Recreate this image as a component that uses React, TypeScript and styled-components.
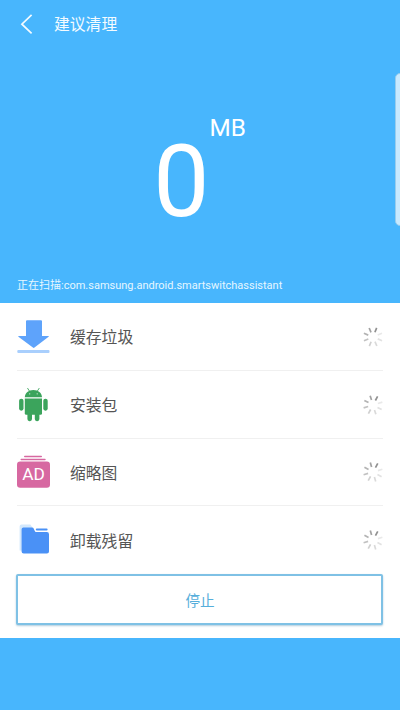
import React from 'react';
import styled, { createGlobalStyle } from 'styled-components';

const GlobalStyle = createGlobalStyle`
  * { box-sizing: border-box; }
  body { margin: 0; background: #48b6fd; }
`;

const Screen = styled.main`
  position: relative;
  display: flex;
  flex-direction: column;
  width: 400px;
  height: 710px;
  overflow: hidden;
  background: #48b6fd;
  font-family: Roboto, 'Noto Sans CJK SC', sans-serif;
`;

const TopBar = styled.header`
  display: flex;
  align-items: center;
  gap: 21px;
  height: 47px;
  padding-left: 20px;
  color: #f4fbff;
`;

const Title = styled.h1`
  margin: 0;
  padding-top: 2px;
  font-size: 15.8px;
  line-height: 24px;
  font-weight: 400;
`;

const Summary = styled.section`
  display: flex;
  flex-direction: column;
  justify-content: space-between;
  height: 256px;
  padding: 67px 17px 7px;
  color: #fff;
`;

const Amount = styled.div`
  display: flex;
  justify-content: center;
  padding-right: 1px;
`;

const Value = styled.span`
  font-size: 100px;
  line-height: 136px;
`;

const Unit = styled.span`
  font-size: 24.3px;
  line-height: 28px;
`;

const Scanning = styled.p`
  margin: 0;
  font-size: 11px;
  line-height: 20px;
  white-space: nowrap;
  color: #e6f6ff;
`;

const Panel = styled.section`
  height: 335px;
  padding: 0 17px;
  background: #fff;
`;

const List = styled.ul`
  margin: 0;
  padding: 0;
  list-style: none;
`;

const Row = styled.li`
  display: grid;
  grid-template-columns: 53px 1fr 20px;
  align-items: center;
  height: 67.75px;
  padding-top: 1px;
  border-bottom: 1px solid #f0f0f0;
  color: #555;

  &:last-child { border-bottom-color: transparent; }
`;

const Label = styled.span`
  padding-top: 3px;
  font-size: 15.8px;
  line-height: 24px;
`;

const StopButton = styled.button`
  display: block;
  width: 367px;
  height: 51px;
  margin-left: -1px;
  padding: 2px 0 0 1px;
  border: 2px solid #7fc1e5;
  border-radius: 2px;
  background: #fff;
  box-shadow: 0 1px 2px rgba(60, 130, 170, 0.4);
  font: 400 14.6px/22px Roboto, 'Noto Sans CJK SC', sans-serif;
  color: #56aedb;
`;

const EdgeHandle = styled.div`
  position: absolute;
  top: 73px;
  right: -5px;
  width: 10px;
  height: 153px;
  border: 1px solid #9acdec;
  border-radius: 5px;
  background: #c8eaff;
`;

const Icon = styled.svg`
  display: block;
  overflow: visible;
`;

const BackIcon = () => (
  <Icon width="13" height="20" viewBox="0 0 13 20" fill="none" stroke="currentColor" strokeWidth="1.7">
    <path d="M11.6 .8 1.9 10.2l9.7 9.1" />
  </Icon>
);

const DownloadIcon = () => (
  <Icon width="34" height="36" viewBox="0 0 34 36">
    <path fill="#5ea3fb" d="M10 1.3h14q1 0 1 1V17h6.4q1 0 .2.8L17.5 28.6q-.8.6-1.6 0L1.4 17.8Q.8 17 1.8 17H9V2.3q0-1 1-1z" />
    <rect x=".3" y="31" width="32.2" height="3.1" rx="1" fill="#a9cffd" />
  </Icon>
);

const AndroidIcon = () => (
  <Icon width="34" height="36" viewBox="0 0 34 36" fill="#3ba45c">
    <path d="M7.8 10.2C8 5.8 11.5 2.9 16.4 2.9s8.4 2.9 8.6 7.3z" />
    <path d="m12.5 4.2-1.8-2.8m9.6 2.8 1.8-2.8" stroke="#3ba45c" strokeWidth=".9" strokeLinecap="round" />
    <circle cx="12.7" cy="6.8" r=".65" fill="#d5ecdc" />
    <circle cx="20.2" cy="6.8" r=".65" fill="#d5ecdc" />
    <path d="M7.8 11.5H25v15q0 1.3-1.4 1.3H9.2q-1.4 0-1.4-1.3z" />
    <rect x="2.1" y="11.7" width="4.4" height="12" rx="2.1" />
    <rect x="26.3" y="11.7" width="4.4" height="12" rx="2.1" />
    <rect x="10.4" y="23" width="4.6" height="11.2" rx="2.1" />
    <rect x="17.8" y="23" width="4.6" height="11.2" rx="2.1" />
  </Icon>
);

const AdIcon = () => (
  <Icon width="34" height="36" viewBox="0 0 34 36">
    <rect x="7" y="1.8" width="18" height="1.5" rx=".7" fill="#d768a1" />
    <rect x="3.5" y="4.7" width="25.2" height="1.5" rx=".7" fill="#d768a1" />
    <rect x="0" y="7.5" width="33" height="26.3" rx="3.2" fill="#d768a1" />
    <text x="16.6" y="26.2" textAnchor="middle" fill="#fff" fontFamily="Roboto, sans-serif" fontSize="17.3">AD</text>
  </Icon>
);

const FolderIcon = () => (
  <Icon width="34" height="36" viewBox="0 0 34 36">
    <path fill="#d3e8fc" d="M4.4 2.6h9l2 3H30v23H2.6V4.4q0-1.8 1.8-1.8z" />
    <path fill="#fff" d="M15.4 2.5h16V11H18z" />
    <rect x="18.8" y="6.5" width="11.8" height="2" rx="1" fill="#4a91f6" />
    <path fill="#4a91f6" d="M6.4 5.4h8.5q1.2 0 1.7 1l1.2 2.5q.6 1.2 1.9 1.2h10.2q2.1 0 2.1 2.1v17.3q0 2.1-2.1 2.1H6.7q-2.1 0-2.1-2.1V7.2q0-1.8 1.8-1.8z" />
  </Icon>
);

const spokeColors = ['#909090', '#e9e9e9', '#e2e2e2', '#dadada', '#d0d0d0', '#c2c2c2', '#b3b3b3', '#a2a2a2'];

const Spinner = ({ angle }: { angle: number }) => (
  <Icon width="20" height="20" viewBox="0 0 20 20" role="img" aria-label="loading">
    {spokeColors.map((color, i) => (
      <path key={i} d="M10 .2v4.7" stroke={color} strokeWidth="1.7" transform={`rotate(${angle + i * 45} 10 10)`} />
    ))}
  </Icon>
);

const items = [
  { label: '缓存垃圾', icon: <DownloadIcon />, angle: 22 },
  { label: '安装包', icon: <AndroidIcon />, angle: 28 },
  { label: '缩略图', icon: <AdIcon />, angle: 29 },
  { label: '卸载残留', icon: <FolderIcon />, angle: 29 },
];

export default function App() {
  return (
    <Screen>
      <GlobalStyle />
      <TopBar>
        <BackIcon />
        <Title>建议清理</Title>
      </TopBar>
      <Summary>
        <Amount>
          <Value>0</Value>
          <Unit>MB</Unit>
        </Amount>
        <Scanning>正在扫描:com.samsung.android.smartswitchassistant</Scanning>
      </Summary>
      <Panel>
        <List>
          {items.map((item) => (
            <Row key={item.label}>
              {item.icon}
              <Label>{item.label}</Label>
              <Spinner angle={item.angle} />
            </Row>
          ))}
        </List>
        <StopButton type="button">停止</StopButton>
      </Panel>
      <EdgeHandle />
    </Screen>
  );
}
